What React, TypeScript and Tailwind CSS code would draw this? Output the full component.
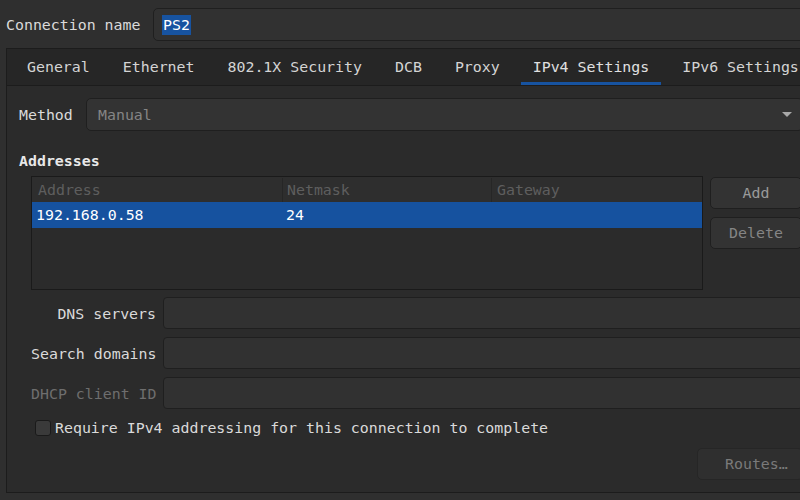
import { useState } from "react";

const tabs = ["General", "Ethernet", "802.1X Security", "DCB", "Proxy", "IPv4 Settings", "IPv6 Settings"];

interface Row {
  address: string;
  netmask: string;
  gateway: string;
}

const rows: Row[] = [{ address: "192.168.0.58", netmask: "24", gateway: "" }];

function Field({ label, disabled }: { label: string; disabled?: boolean }) {
  return (
    <div className="flex items-center">
      <div
        className={`w-[125px] shrink-0 whitespace-nowrap pt-[1px] text-right leading-[18px] ${
          disabled ? "text-[#6e6e6e]" : "text-[#dadada]"
        }`}
      >
        {label}
      </div>
      <div className="ml-[7px] h-[32px] flex-1 rounded-[4px] border border-[#1f1f1f] bg-[#313131]" />
    </div>
  );
}

export default function App() {
  const [active] = useState("IPv4 Settings");
  const [required, setRequired] = useState(false);

  return (
    <div
      className="h-[500px] w-[800px] overflow-hidden bg-[#2f2f2f] text-[14.9px] text-[#dadada]"
      style={{ fontFamily: '"DejaVu Sans Mono", "Liberation Mono", monospace' }}
    >
      <div className="w-[830px]">
        {/* connection name */}
        <div className="flex items-center pt-[8px]">
          <div className="w-[153px] shrink-0 whitespace-nowrap pl-[6px] pt-[1px] leading-[18px]">Connection name</div>
          <div className="flex h-[33px] flex-1 items-center rounded-[5px] border border-[#1f1f1f] bg-[#313131] pl-[8px]">
            <span className="bg-[#1753a0] px-[1px] leading-[20px] text-white">PS2</span>
          </div>
        </div>

        {/* tab frame */}
        <div className="ml-[6px] mt-[7px] h-[445px] w-[810px] border border-[#1c1c1c] bg-[#2b2b2b]">
          <div className="flex h-[37px] gap-[9px] border-b border-[#1c1c1c] bg-[#262626] pl-[8px]">
            {tabs.map((t) => (
              <div
                key={t}
                className={`flex h-full items-center whitespace-nowrap border-b-[3px] px-[12px] pt-[3px] leading-[18px] ${
                  t === active ? "border-[#1753a0] text-[#e0e0e0]" : "border-transparent text-[#d4d4d4]"
                }`}
              >
                {t}
              </div>
            ))}
          </div>

          <div className="pl-[12px] pr-[12px]">
            {/* method */}
            <div className="mt-[12px] flex items-center">
              <div className="w-[67px] shrink-0 pt-[1px] leading-[18px]">Method</div>
              <div className="flex h-[33px] flex-1 items-center justify-between rounded-[5px] border border-[#1f1f1f] bg-[#333333] pl-[11px] pr-[10px]">
                <span className="pt-[1px] text-[#858585]">Manual</span>
                <svg width="10" height="6" viewBox="0 0 10 6">
                  <path d="M0 0h10L5 5z" fill="#a8a8a8" />
                </svg>
              </div>
            </div>

            <div className="mt-[21px] font-bold leading-[18px] text-[#e8e8e8]">Addresses</div>

            {/* addresses table */}
            <div className="mt-[6px] flex pl-[12px]">
              <div className="h-[114px] w-[672px] shrink-0 border border-[#1a1a1a] bg-[#2b2b2b]">
                <div className="flex h-[25px] items-center bg-[#2e2e2e] pt-[1px] text-[#5e5e5e]">
                  <div className="h-full w-[251px] border-r border-[#262626] pl-[6px] leading-[25px]">Address</div>
                  <div className="h-full w-[209px] border-r border-[#262626] pl-[4px] leading-[25px]">Netmask</div>
                  <div className="h-full flex-1 pl-[5px] leading-[25px]">Gateway</div>
                </div>
                {rows.map((r) => (
                  <div key={r.address} className="flex h-[26px] items-center bg-[#16529f] pt-[1px] text-white">
                    <div className="w-[251px] pl-[4px]">{r.address}</div>
                    <div className="w-[209px] pl-[3px]">{r.netmask}</div>
                    <div className="flex-1">{r.gateway}</div>
                  </div>
                ))}
              </div>
              <div className="ml-[7px] mt-[1px] flex w-[92px] flex-col gap-[8px]">
                <button className="h-[32px] rounded-[5px] border border-[#1f1f1f] bg-[#333333] pt-[1px] text-[#9a9a9a]">
                  Add
                </button>
                <button className="h-[32px] rounded-[5px] border border-[#1f1f1f] bg-[#333333] pt-[1px] text-[#858585]">
                  Delete
                </button>
              </div>
            </div>

            {/* dns etc. */}
            <div className="mt-[7px] flex flex-col gap-[8px] pl-[12px]">
              <Field label="DNS servers" />
              <Field label="Search domains" />
              <Field label="DHCP client ID" disabled />
            </div>

            <label className="ml-[16px] mt-[10px] flex items-center gap-[4px]">
              <span
                onClick={() => setRequired(!required)}
                className="h-[16px] w-[16px] rounded-[3px] border border-[#1a1a1a] bg-[#3a3a3a]"
              />
              <span className="whitespace-nowrap leading-[18px] text-[#dadada]">
                Require IPv4 addressing for this connection to complete
              </span>
            </label>

            <div className="mt-[11px] flex">
              <button className="ml-[678px] h-[32px] w-[106px] rounded-[5px] border border-[#262626] bg-[#2f2f2f] pl-[27px] text-left text-[#7a7a7a]">
                Routes…
              </button>
            </div>
          </div>
        </div>
      </div>
    </div>
  );
}
